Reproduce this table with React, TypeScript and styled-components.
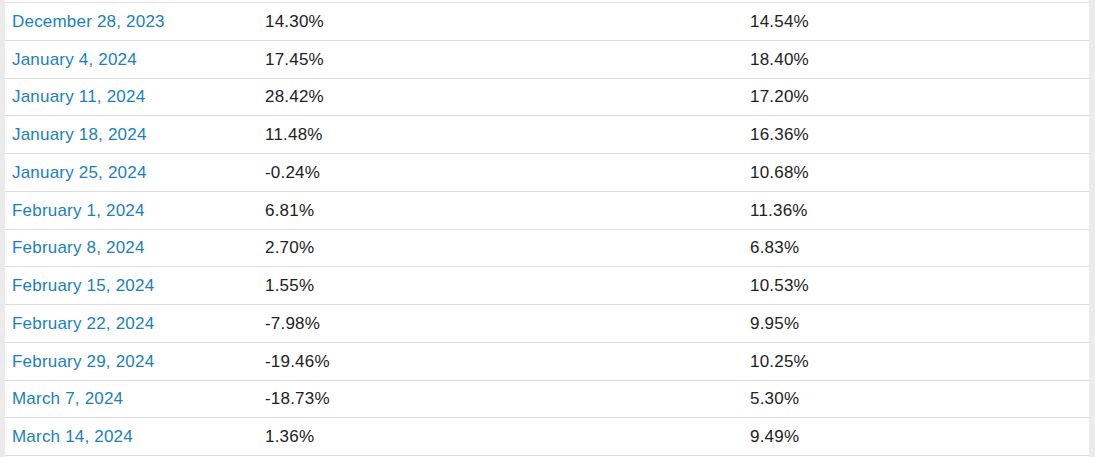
import React from 'react';
import styled, {createGlobalStyle} from 'styled-components';

type RowType = {
    date: string
    first: string
    second: string
}

const rows: Array<RowType> = [
    {date: 'December 28, 2023', first: '14.30%', second: '14.54%'},
    {date: 'January 4, 2024', first: '17.45%', second: '18.40%'},
    {date: 'January 11, 2024', first: '28.42%', second: '17.20%'},
    {date: 'January 18, 2024', first: '11.48%', second: '16.36%'},
    {date: 'January 25, 2024', first: '-0.24%', second: '10.68%'},
    {date: 'February 1, 2024', first: '6.81%', second: '11.36%'},
    {date: 'February 8, 2024', first: '2.70%', second: '6.83%'},
    {date: 'February 15, 2024', first: '1.55%', second: '10.53%'},
    {date: 'February 22, 2024', first: '-7.98%', second: '9.95%'},
    {date: 'February 29, 2024', first: '-19.46%', second: '10.25%'},
    {date: 'March 7, 2024', first: '-18.73%', second: '5.30%'},
    {date: 'March 14, 2024', first: '1.36%', second: '9.49%'},
];

const GlobalStyle = createGlobalStyle`
  html, body {
    margin: 0;
    background: #ebebeb;
    font-family: "Liberation Sans", Arial, sans-serif;
  }
`

const App = () => {
    return (
        <>
            <GlobalStyle/>
            <Page>
                <Table>
                    <colgroup>
                        <col style={{width: 253}}/>
                        <col style={{width: 485}}/>
                        <col/>
                    </colgroup>
                    <tbody>
                    {rows.map((row) => (
                        <Row key={row.date}>
                            <Cell><DateLink href="#">{row.date}</DateLink></Cell>
                            <Cell>{row.first}</Cell>
                            <Cell>{row.second}</Cell>
                        </Row>
                    ))}
                    </tbody>
                </Table>
            </Page>
        </>
    );
};

export default App;

const Page = styled.div`
  margin-left: 5px;
  width: 1084px;
  height: 457px;
  background: #fff;
  padding-top: 2px;
  box-sizing: border-box;
  overflow: hidden;
`
const Table = styled.table`
  width: 100%;
  border-collapse: collapse;
  table-layout: fixed;
  border-bottom: 1px solid #dddddd;
`
const Row = styled.tr`
  height: 37.75px;
  &:first-child td {
    border-top-color: #e0dde6;
  }
`
const Cell = styled.td`
  box-sizing: border-box;
  height: 37.75px;
  padding: 1px 7px 0;
  border-top: 1px solid #dddddd;
  font-size: 17px;
  letter-spacing: 0.2px;
  color: #222222;
  vertical-align: middle;
  white-space: nowrap;
`
const DateLink = styled.a`
  color: #1b7fbe;
  text-decoration: none;
`
